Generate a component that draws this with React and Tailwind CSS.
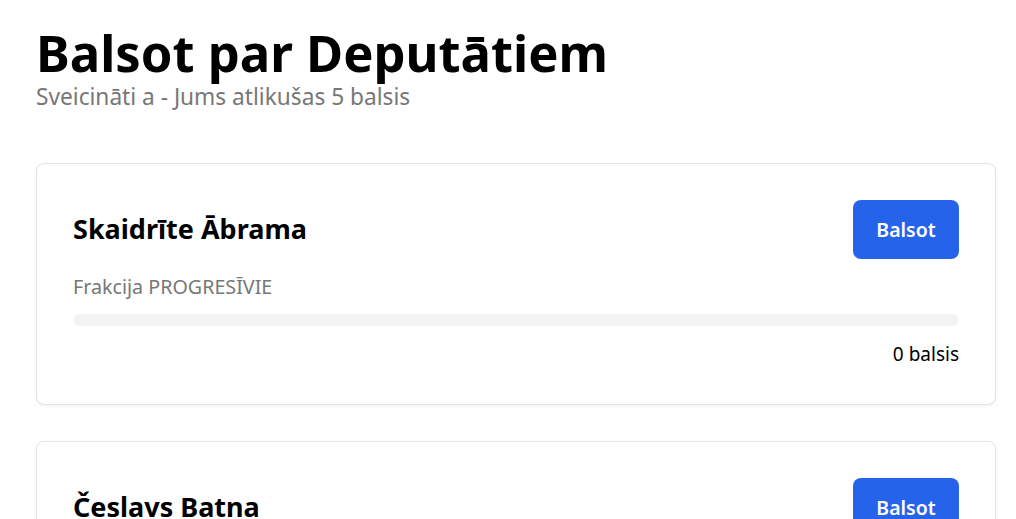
import React from 'react';

const deputies = [
  { name: 'Skaidrīte Ābrama', faction: 'PROGRESĪVIE', votes: 0 },
  { name: 'Česlavs Batna', faction: 'JAUNĀ VIENOTĪBA', votes: 0 },
];

const DeputyCard = ({ deputy }) => (
  <div className="mb-9 rounded-lg border border-[#e5e5e5] bg-white p-9 shadow-[0_1px_3px_rgba(0,0,0,0.06)]">
    <div className="flex items-center justify-between">
      <h2 className="text-[27px] font-bold leading-[1.25] text-black">{deputy.name}</h2>
      <button className="h-[59px] w-[106px] rounded-lg bg-[#2563eb] text-[19.5px] font-semibold text-white">
        Balsot
      </button>
    </div>
    <p className="mt-[14px] text-[19.7px] leading-[28px] text-[#777]">Frakcija {deputy.faction}</p>
    <div className="mt-[13px] h-3 w-full rounded-full bg-[#f3f3f3]" />
    <p className="mt-[14px] text-right text-[19px] leading-[28px] text-black">{deputy.votes} balsis</p>
  </div>
);

export default function App() {
  return (
    <div className="min-h-screen bg-white pl-9 pr-5 pt-7 font-['Noto_Sans',sans-serif]">
      <h1 className="text-[50.75px] font-bold leading-none text-black">Balsot par Deputātiem</h1>
      <p className="mt-[3px] text-[22.7px] leading-[30px] text-[#777]">Sveicināti a - Jums atlikušas 5 balsis</p>
      <div className="mt-[51px]">
        {deputies.map((d) => (
          <DeputyCard key={d.name} deputy={d} />
        ))}
      </div>
    </div>
  );
}
